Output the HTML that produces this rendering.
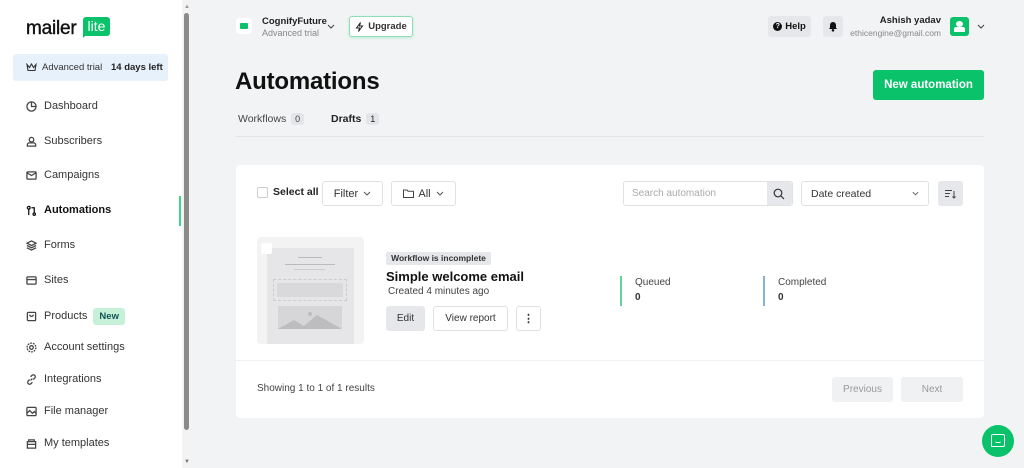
<!DOCTYPE html>
<html><head><meta charset="utf-8"><style>
*{box-sizing:border-box;margin:0;padding:0}
body{width:1024px;height:468px;overflow:hidden;background:#f2f3f5;font-family:"Liberation Sans",sans-serif;color:#111;position:relative}
.abs{position:absolute}
.side{left:0;top:0;width:182px;height:468px;background:#fff}
.nav{position:absolute;left:26px;font-size:11px;color:#333;display:flex;align-items:center;height:14px}
.nav svg{width:11px;height:11px;margin-right:7px;stroke:#444;fill:none;stroke-width:1.4}
.btn{position:absolute;background:#fff;border:1px solid #dfe1e5;border-radius:3px;font-size:11px;color:#333;display:flex;align-items:center;justify-content:center}
.chev{margin-left:5px}
</style></head><body>
<div class="abs side">
  <div class="abs" style="left:26px;top:18px;font-size:19px;color:#111;letter-spacing:-0.2px;-webkit-text-stroke:0.4px #111">mailer</div>
  <div class="abs" style="left:83px;top:17px;width:27px;height:19px;background:#09c269;border-radius:3px;color:#fff;font-size:14px;text-align:center;line-height:18px">lite</div>
  <div class="abs" style="left:83px;top:33px;width:0;height:0;border-left:5px solid #09c269;border-bottom:5px solid transparent"></div>
  <div class="abs" style="left:13px;top:54px;width:155px;height:27px;background:#e7f1fc;border-radius:3px;font-size:9.5px;color:#222">
    <svg class="abs" style="left:13px;top:9px" width="11" height="9" viewBox="0 0 11 9"><path d="M1 1.5l2.5 3L5.5 1l2 3.5L10 1.5 9 7.5H2z" fill="none" stroke="#333" stroke-width="1.1"/></svg>
    <span class="abs" style="left:29px;top:8px;color:#333">Advanced trial</span>
    <span class="abs" style="left:98px;top:8px;font-weight:bold">14 days left</span>
  </div>
  <div class="nav" style="top:99px"><svg viewBox="0 0 12 12"><circle cx="6" cy="6" r="5"/><path d="M6 1v5h5"/></svg>Dashboard</div>
  <div class="nav" style="top:134px"><svg viewBox="0 0 12 12"><circle cx="6" cy="4" r="2.5"/><path d="M1.5 11v-1.5a2 2 0 012-2h5a2 2 0 012 2V11z"/></svg>Subscribers</div>
  <div class="nav" style="top:168px"><svg viewBox="0 0 12 12"><rect x="1" y="2" width="10" height="8" rx="1"/><path d="M1 3l5 3 5-3"/></svg>Campaigns</div>
  <div class="nav" style="top:203px;color:#111;font-weight:bold"><svg viewBox="0 0 12 12" style="stroke:#111"><circle cx="3" cy="3" r="1.5"/><path d="M3 4.5V11M6 3h3v6"/><circle cx="9" cy="10" r="1.3"/></svg>Automations</div>
  <div class="nav" style="top:238px"><svg viewBox="0 0 12 12"><path d="M6 1l5 2.5-5 2.5-5-2.5zM1 6l5 2.5L11 6M1 8.5l5 2.5 5-2.5"/></svg>Forms</div>
  <div class="nav" style="top:273px"><svg viewBox="0 0 12 12"><rect x="1" y="2" width="10" height="8" rx="1"/><path d="M1 5h10"/></svg>Sites</div>
  <div class="nav" style="top:309px"><svg viewBox="0 0 12 12"><rect x="1.5" y="1.5" width="9" height="9" rx="1"/><path d="M4 4a2 2 0 004 0"/></svg>Products<span style="margin-left:6px;background:#c6f1d9;color:#155;font-size:9.5px;font-weight:bold;padding:3px 6px;border-radius:3px">New</span></div>
  <div class="nav" style="top:340px"><svg viewBox="0 0 12 12"><circle cx="6" cy="6" r="2"/><circle cx="6" cy="6" r="4.8" stroke-dasharray="2 1"/></svg>Account settings</div>
  <div class="nav" style="top:372px"><svg viewBox="0 0 12 12"><path d="M5 7l2-2M4 6L2.5 7.5a2 2 0 003 3L7 9M8 6l1.5-1.5a2 2 0 00-3-3L5 3"/></svg>Integrations</div>
  <div class="nav" style="top:404px"><svg viewBox="0 0 12 12"><rect x="1" y="1.5" width="10" height="9" rx="1"/><path d="M1 8l3-3 3 3 2-2 2 2"/></svg>File manager</div>
  <div class="nav" style="top:436px"><svg viewBox="0 0 12 12"><path d="M3 4V2h6v2M1.5 4h9v7h-9zM1.5 7h9"/></svg>My templates</div>
  <div class="abs" style="left:179px;top:196px;width:2px;height:30px;background:#3dd68c"></div>
</div>
<div class="abs" style="left:182px;top:0;width:10px;height:468px;background:#f3f3f3"></div>
<div class="abs" style="left:184px;top:13px;width:5px;height:417px;background:#8b8b8b;border-radius:3px"></div>
<div class="abs" style="left:184px;top:4px;font-size:6px;color:#999">▲</div>
<div class="abs" style="left:184px;top:459px;font-size:6px;color:#777">▼</div>

<!-- header -->
<div class="abs" style="left:236px;top:18px;width:16px;height:16px;background:#fff;border-radius:3px"><div class="abs" style="left:4px;top:5px;width:8px;height:6px;background:#09c269;border-radius:1px"></div></div>
<div class="abs" style="left:262px;top:16px;font-size:9.5px;font-weight:bold;color:#222">CognifyFuture</div>
<div class="abs" style="left:262px;top:28px;font-size:9px;color:#888">Advanced trial</div>
<svg class="abs" style="left:327px;top:24px" width="8" height="5" viewBox="0 0 8 5"><path d="M1 1l3 3 3-3" stroke="#444" fill="none" stroke-width="1.1"/></svg>
<div class="btn" style="left:349px;top:16px;width:64px;height:21px;border:1px solid #8fdcb5;font-size:9.5px;font-weight:bold;box-shadow:0 1px 3px #bdebd2"><svg width="9" height="10" viewBox="0 0 9 10" style="margin-right:4px"><path d="M5.5.5L1.5 6h3l-1 3.5L7.5 4h-3z" fill="none" stroke="#222" stroke-width="1"/></svg>Upgrade</div>
<div class="abs" style="left:768px;top:16px;width:43px;height:21px;background:#e6e7ea;border-radius:3px;font-size:9.5px;font-weight:bold;display:flex;align-items:center;justify-content:center"><span style="display:inline-block;width:9px;height:9px;border-radius:50%;background:#111;color:#fff;font-size:7px;text-align:center;line-height:9px;margin-right:3px">?</span>Help</div>
<div class="abs" style="left:823px;top:16px;width:20px;height:21px;background:#e6e7ea;border-radius:3px"><svg class="abs" style="left:5px;top:5px" width="10" height="11" viewBox="0 0 10 11"><path d="M1 8h8L8 6.5V4a3 3 0 00-6 0v2.5z" fill="#111"/><circle cx="5" cy="9.3" r="1.3" fill="#111"/></svg></div>
<div class="abs" style="right:83px;top:15px;font-size:9.5px;font-weight:bold;color:#222;text-align:right">Ashish yadav</div>
<div class="abs" style="right:83px;top:28px;font-size:8.5px;color:#888;text-align:right">ethicengine@gmail.com</div>
<div class="abs" style="left:950px;top:17px;width:19px;height:19px;background:#09c269;border-radius:3px"><div class="abs" style="left:6px;top:4px;width:7px;height:6px;border-radius:50%;background:#fff"></div><div class="abs" style="left:4px;top:10px;width:11px;height:5px;border-radius:2px 2px 0 0;background:#fff"></div></div>
<svg class="abs" style="left:977px;top:24px" width="8" height="5" viewBox="0 0 8 5"><path d="M1 1l3 3 3-3" stroke="#444" fill="none" stroke-width="1.1"/></svg>

<div class="abs" style="left:235px;top:68px;font-size:24px;font-weight:bold;color:#111;letter-spacing:-0.2px">Automations</div>
<div class="abs" style="left:873px;top:70px;width:111px;height:30px;background:#09c269;border-radius:3px;color:#fff;font-size:11.5px;font-weight:bold;text-align:center;line-height:30px">New automation</div>
<div class="abs" style="left:238px;top:113px;font-size:10.5px;color:#444">Workflows <span style="background:#e4e5e8;padding:1px 4px;border-radius:3px;font-size:9px;margin-left:2px">0</span></div>
<div class="abs" style="left:331px;top:113px;font-size:10.5px;color:#222;font-weight:bold">Drafts <span style="background:#e4e5e8;padding:1px 4px;border-radius:3px;font-size:9px;margin-left:2px;font-weight:normal">1</span></div>
<div class="abs" style="left:236px;top:136px;width:748px;height:1px;background:#e2e3e6"></div>

<!-- card -->
<div class="abs" style="left:236px;top:165px;width:748px;height:253px;background:#fff;border-radius:4px"></div>
<div class="abs" style="left:257px;top:187px;width:11px;height:11px;border:1px solid #ccc;border-radius:2px"></div>
<div class="abs" style="left:273px;top:186px;font-size:10.5px;font-weight:bold;color:#222">Select all</div>
<div class="btn" style="left:322px;top:181px;width:61px;height:25px">Filter<svg class="chev" width="8" height="5" viewBox="0 0 8 5"><path d="M1 1l3 3 3-3" stroke="#555" fill="none"/></svg></div>
<div class="btn" style="left:391px;top:181px;width:65px;height:25px"><svg width="11" height="9" viewBox="0 0 11 9" style="margin-right:4px"><path d="M.5 1h3.5l1 1.2h5.5V8.5H.5z" fill="none" stroke="#444"/></svg>All<svg class="chev" width="8" height="5" viewBox="0 0 8 5"><path d="M1 1l3 3 3-3" stroke="#555" fill="none"/></svg></div>
<div class="btn" style="left:623px;top:181px;width:170px;height:25px;justify-content:flex-start;padding-left:8px;color:#aaa;font-size:10px">Search automation</div>
<div class="abs" style="left:767px;top:182px;width:25px;height:23px;background:#e6e7ea;border-radius:0 3px 3px 0"><svg width="12" height="12" viewBox="0 0 12 12" style="margin:6px"><circle cx="5" cy="5" r="3.8" fill="none" stroke="#333" stroke-width="1.2"/><path d="M8 8l3 3" stroke="#333" stroke-width="1.2"/></svg></div>
<div class="btn" style="left:801px;top:181px;width:128px;height:25px;justify-content:space-between;padding:0 9px;font-size:10.5px">Date created<svg width="7" height="5" viewBox="0 0 8 5"><path d="M1 1l3 3 3-3" stroke="#555" fill="none"/></svg></div>
<div class="abs" style="left:938px;top:181px;width:25px;height:25px;background:#e6e7ea;border-radius:3px"><svg width="11" height="10" viewBox="0 0 11 10" style="margin:8px 7px"><path d="M0 1.5h7M0 4.5h5M0 7.5h4M9 2v7M7.5 7.5l1.5 1.5 1.5-1.5" stroke="#444" fill="none"/></svg></div>

<div class="abs" style="left:257px;top:237px;width:107px;height:107px;background:#f3f3f4;border-radius:4px"></div>
<div class="abs" style="left:267px;top:248px;width:87px;height:96px;background:#e6e6e8"></div>
<div class="abs" style="left:261px;top:243px;width:11px;height:11px;background:#fff;border-radius:2px"></div>
<div class="abs" style="left:298px;top:257px;width:24px;height:1px;background:#bbb"></div>
<div class="abs" style="left:285px;top:264px;width:50px;height:1px;background:#bbb"></div>
<div class="abs" style="left:294px;top:269px;width:31px;height:1px;background:#ccc"></div>
<div class="abs" style="left:273px;top:279px;width:74px;height:22px;border:1px dashed #ccc"></div>
<div class="abs" style="left:277px;top:283px;width:66px;height:14px;background:#d9d9db"></div>
<div class="abs" style="left:278px;top:306px;width:64px;height:23px;background:#d6d6d8"></div>
<svg class="abs" style="left:278px;top:306px" width="64" height="23"><path d="M0 23L16 14 26 20 39 9 64 23z" fill="#bdbdbf"/><circle cx="32" cy="8" r="2" fill="#bdbdbf"/></svg>

<div class="abs" style="left:386px;top:252px;width:105px;height:13px;background:#e6e7ea;border-radius:2px;font-size:8.5px;font-weight:bold;color:#333;text-align:center;line-height:13px">Workflow is incomplete</div>
<div class="abs" style="left:386px;top:269px;font-size:13px;font-weight:bold;color:#111">Simple welcome email</div>
<div class="abs" style="left:388px;top:286px;font-size:10px;color:#444">Created 4 minutes ago</div>
<div class="abs" style="left:386px;top:306px;width:39px;height:25px;background:#e6e7ea;border-radius:3px;font-size:10px;color:#333;text-align:center;line-height:25px">Edit</div>
<div class="btn" style="left:433px;top:306px;width:75px;height:25px;font-size:10px">View report</div>
<div class="btn" style="left:516px;top:306px;width:25px;height:25px;font-weight:bold">⋮</div>

<div class="abs" style="left:620px;top:276px;width:2px;height:30px;background:#62d49a"></div>
<div class="abs" style="left:635px;top:277px;font-size:10px;color:#444">Queued</div>
<div class="abs" style="left:635px;top:292px;font-size:10px;font-weight:bold;color:#333">0</div>
<div class="abs" style="left:763px;top:276px;width:2px;height:30px;background:#8cb1d0"></div>
<div class="abs" style="left:778px;top:277px;font-size:10px;color:#444">Completed</div>
<div class="abs" style="left:778px;top:292px;font-size:10px;font-weight:bold;color:#333">0</div>

<div class="abs" style="left:236px;top:360px;width:748px;height:1px;background:#eeeff1"></div>
<div class="abs" style="left:257px;top:383px;font-size:10px;color:#444">Showing 1 to 1 of 1 results</div>
<div class="abs" style="left:832px;top:377px;width:61px;height:25px;background:#f0f1f3;border-radius:3px;font-size:10px;color:#999;text-align:center;line-height:25px">Previous</div>
<div class="abs" style="left:901px;top:377px;width:62px;height:25px;background:#f0f1f3;border-radius:3px;font-size:10px;color:#999;text-align:center;line-height:25px">Next</div>

<div class="abs" style="left:982px;top:425px;width:32px;height:32px;border-radius:50%;background:#09c269"><div class="abs" style="left:9px;top:9px;width:14px;height:13px;border:1.5px solid #fff;border-radius:2px 2px 2px 0"></div><div class="abs" style="left:13px;top:16px;width:6px;height:2px;border-bottom:1.2px solid #fff;border-radius:0 0 3px 3px"></div></div>
</body></html>
